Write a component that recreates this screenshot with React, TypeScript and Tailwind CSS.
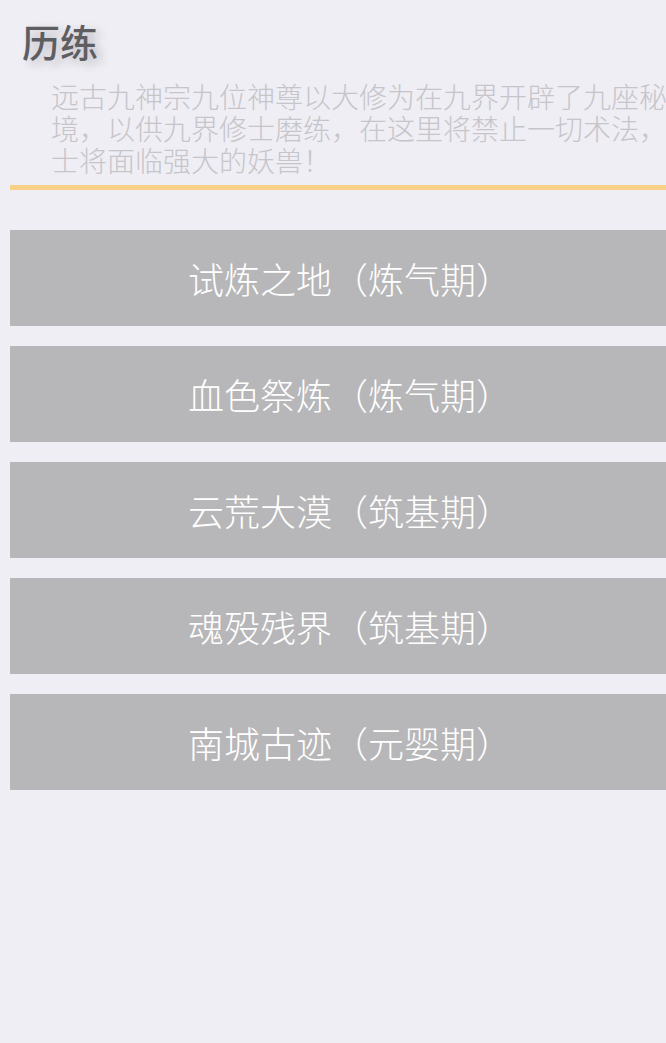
import React from 'react';

const trials = [
  { name: '试炼之地', realm: '炼气期' },
  { name: '血色祭炼', realm: '炼气期' },
  { name: '云荒大漠', realm: '筑基期' },
  { name: '魂殁残界', realm: '筑基期' },
  { name: '南城古迹', realm: '元婴期' },
];

const cjk = { fontFamily: '"Noto Sans CJK SC", "Noto Sans", sans-serif' };

const App: React.FC = () => {
  return (
    <div lang="zh-CN" className="w-full h-[1043px] overflow-hidden bg-[#efeef4]" style={cjk}>
      <div className="w-[700px] px-[10px]">
        {/* page header */}
        <div className="pt-[22px]">
          <h1 className="pl-[12px] text-[38px] leading-[38px] font-medium text-[#5e5e62] [text-shadow:6px_4px_10px_rgba(0,0,0,0.22)]">
            历练
          </h1>
          <p className="mt-[20px] ml-[41px] w-[650px] text-[28px] leading-[32px] font-light text-[#c6c5ca]">
            远古九神宗九位神尊以大修为在九界开辟了九座秘境，以供九界修士磨练，在这里将禁止一切术法，修士将面临强大的妖兽！
          </p>
          <div className="mt-[9px] h-[5px] bg-[#f8d189]" />
        </div>

        {/* trial list */}
        <div className="mt-[40px] flex flex-col gap-[20px]">
          {trials.map((t) => (
            <button
              key={t.name}
              className="h-[96px] w-full bg-[#b7b7b9] text-white text-[36px] font-light flex items-center justify-center"
            >
              {t.name}（{t.realm}）
            </button>
          ))}
        </div>
      </div>
    </div>
  );
};

export default App;
